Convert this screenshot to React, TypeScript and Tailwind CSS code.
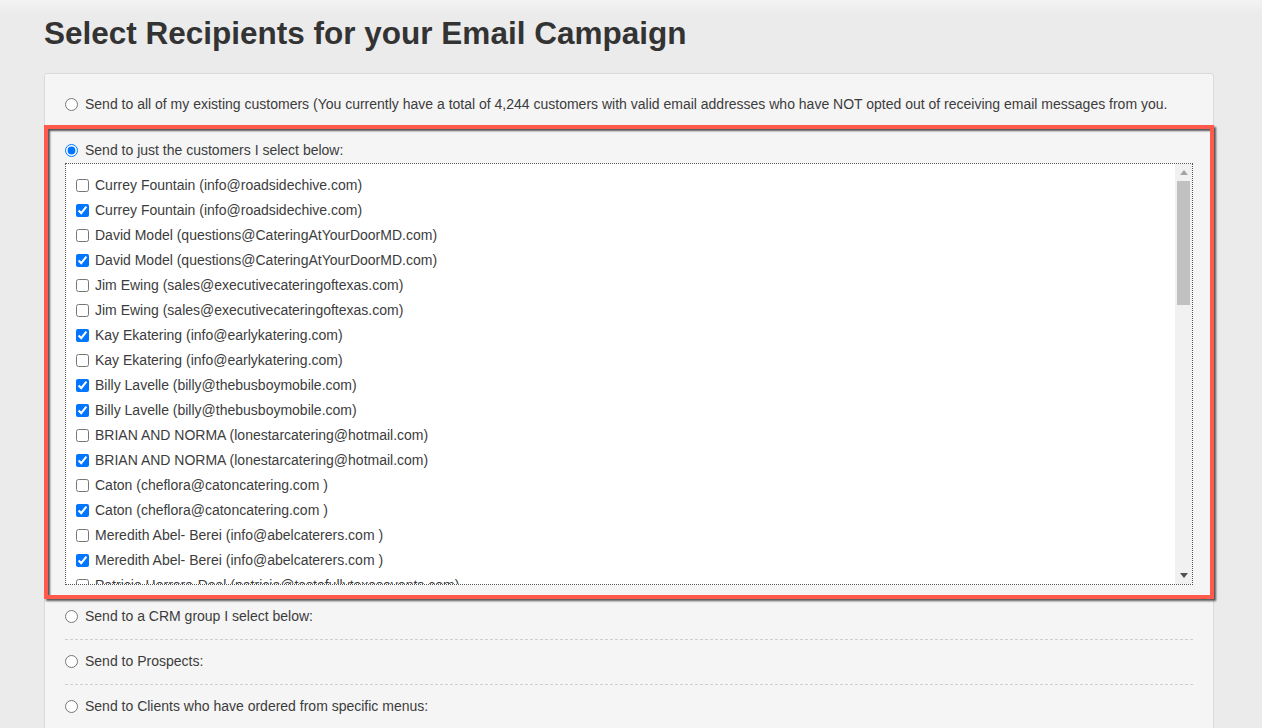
import React from "react";

const rows: [boolean, string][] = [
  [false, "Currey Fountain (info@roadsidechive.com)"],
  [true, "Currey Fountain (info@roadsidechive.com)"],
  [false, "David Model (questions@CateringAtYourDoorMD.com)"],
  [true, "David Model (questions@CateringAtYourDoorMD.com)"],
  [false, "Jim Ewing (sales@executivecateringoftexas.com)"],
  [false, "Jim Ewing (sales@executivecateringoftexas.com)"],
  [true, "Kay Ekatering (info@earlykatering.com)"],
  [false, "Kay Ekatering (info@earlykatering.com)"],
  [true, "Billy Lavelle (billy@thebusboymobile.com)"],
  [true, "Billy Lavelle (billy@thebusboymobile.com)"],
  [false, "BRIAN AND NORMA (lonestarcatering@hotmail.com)"],
  [true, "BRIAN AND NORMA (lonestarcatering@hotmail.com)"],
  [false, "Caton (cheflora@catoncatering.com )"],
  [true, "Caton (cheflora@catoncatering.com )"],
  [false, "Meredith Abel- Berei (info@abelcaterers.com )"],
  [true, "Meredith Abel- Berei (info@abelcaterers.com )"],
  [false, "Patricia Herrera-Deal (patricia@tastefullytexasevents.com)"],
];

function Radio({ checked, label }: { checked?: boolean; label: string }) {
  return (
    <label className="flex items-center h-[18px] leading-[18px]">
      <input
        type="radio"
        name="recip"
        defaultChecked={checked}
        className="m-0 mr-[7px] w-[13px] h-[13px] accent-[#0075ff]"
      />
      <span>{label}</span>
    </label>
  );
}

export default function App() {
  return (
    <div
      className="min-h-[728px] h-[728px] bg-[linear-gradient(to_bottom,#f3f3f3,#ebebeb_14px)] pl-[44px] overflow-hidden text-[14px] text-[#3c3c3c]"
      style={{ fontFamily: '"Liberation Sans", Arial, sans-serif' }}
    >
      <h1 className="pt-[15px] text-[31.5px] leading-[36px] font-bold text-[#333333]">
        Select Recipients for your Email Campaign
      </h1>
      <div className="mt-[22px] w-[1170px] h-[700px] bg-[#f5f5f5] border border-[#dadada] rounded-[3px]">
        <div className="px-[20px] pt-[21px] pb-[12px]">
          <Radio label="Send to all of my existing customers (You currently have a total of 4,244 customers with valid email addresses who have NOT opted out of receiving email messages from you." />
        </div>
        <div className="-mx-px border-[4px] border-[#ff5a4c] shadow-[2px_2px_2px_rgba(0,0,0,0.65),inset_2px_2px_2px_rgba(0,0,0,0.65)] px-[17px] pt-[12px] pb-[10px]">
          <Radio checked label="Send to just the customers I select below:" />
          <div className="mt-[4px] h-[422px] border border-dotted border-[#555] bg-white flex overflow-hidden">
            <div className="flex-1 overflow-hidden pt-[9px] pl-[10px]">
              {rows.map(([c, t], i) => (
                <label key={i} className="flex items-center h-[25px] whitespace-nowrap">
                  <input
                    type="checkbox"
                    defaultChecked={c}
                    className="m-0 mr-[6px] w-[13px] h-[13px] accent-[#0075ff]"
                  />
                  <span>{t}</span>
                </label>
              ))}
            </div>
            <div className="w-[17px] bg-[#f1f1f1] flex flex-col items-center">
              <div className="h-[17px] w-full flex items-center justify-center">
                <svg width="8" height="5" viewBox="0 0 8 5">
                  <path d="M0 5 L4 0 L8 5 Z" fill="#a3a3a3" />
                </svg>
              </div>
              <div className="w-[13px] h-[124px] bg-[#c1c1c1]" />
              <div className="flex-1" />
              <div className="h-[17px] w-full flex items-center justify-center">
                <svg width="8" height="5" viewBox="0 0 8 5">
                  <path d="M0 0 L8 0 L4 5 Z" fill="#505050" />
                </svg>
              </div>
            </div>
          </div>
        </div>
        <div className="mx-[20px] pt-[8px] pb-[14px] border-b border-dashed border-[#cfcfcf]">
          <Radio label="Send to a CRM group I select below:" />
        </div>
        <div className="mx-[20px] pt-[12px] pb-[14px] border-b border-dashed border-[#cfcfcf]">
          <Radio label="Send to Prospects:" />
        </div>
        <div className="mx-[20px] pt-[12px] pb-[14px]">
          <Radio label="Send to Clients who have ordered from specific menus:" />
        </div>
      </div>
    </div>
  );
}
